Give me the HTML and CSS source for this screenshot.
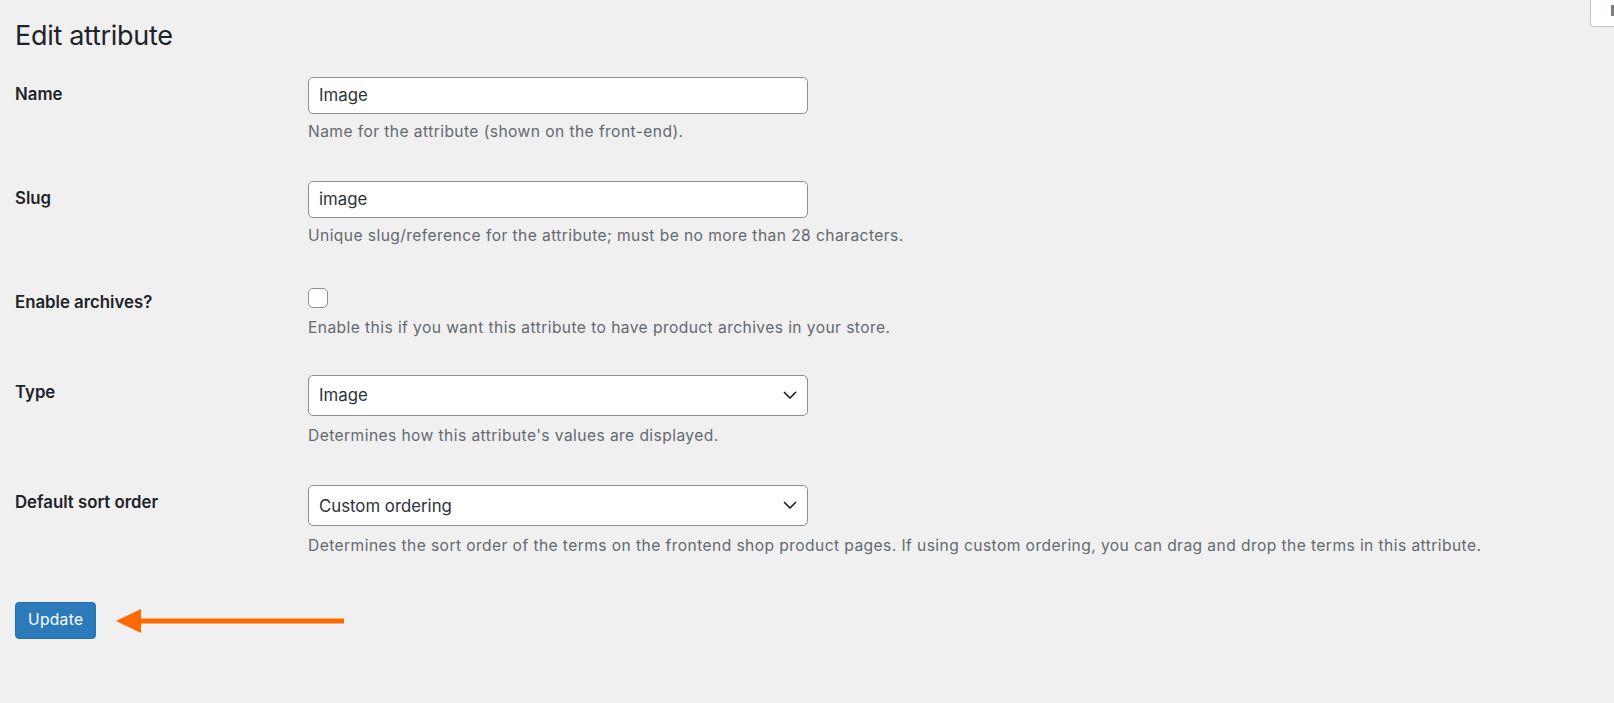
FILE: index.html
```html
<!DOCTYPE html>
<html lang="en">
<head>
<meta charset="utf-8">
<title>Edit attribute</title>
<link rel="stylesheet" href="styles.css">
</head>
<body>
<div class="screen-tab"><span class="screen-mark"></span></div>
<div class="wrap">
  <h1 class="title">Edit attribute</h1>
  <form class="form-table">
    <div class="row row-text">
      <label class="row-label" for="name">Name</label>
      <div class="row-field">
        <input class="text-input" id="name" type="text" value="Image">
        <p class="desc">Name for the attribute (shown on the front-end).</p>
      </div>
    </div>
    <div class="row row-text">
      <label class="row-label" for="slug">Slug</label>
      <div class="row-field">
        <input class="text-input" id="slug" type="text" value="image">
        <p class="desc">Unique slug/reference for the attribute; must be no more than 28 characters.</p>
      </div>
    </div>
    <div class="row row-check">
      <label class="row-label" for="archives">Enable archives?</label>
      <div class="row-field">
        <input class="checkbox" id="archives" type="checkbox">
        <p class="desc desc-check">Enable this if you want this attribute to have product archives in your store.</p>
      </div>
    </div>
    <div class="row row-select">
      <label class="row-label" for="type">Type</label>
      <div class="row-field">
        <div class="select-wrap">
          <select class="select" id="type"><option>Image</option></select>
          <svg class="chevron" width="14" height="9" viewBox="0 0 14 9"><path d="M1.5 1.5 L7 7 L12.5 1.5" fill="none" stroke="#1d2327" stroke-width="1.7" stroke-linecap="round" stroke-linejoin="round"/></svg>
        </div>
        <p class="desc desc-select">Determines how this attribute's values are displayed.</p>
      </div>
    </div>
    <div class="row row-select">
      <label class="row-label" for="order">Default sort order</label>
      <div class="row-field">
        <div class="select-wrap">
          <select class="select" id="order"><option>Custom ordering</option></select>
          <svg class="chevron" width="14" height="9" viewBox="0 0 14 9"><path d="M1.5 1.5 L7 7 L12.5 1.5" fill="none" stroke="#1d2327" stroke-width="1.7" stroke-linecap="round" stroke-linejoin="round"/></svg>
        </div>
        <p class="desc desc-select">Determines the sort order of the terms on the frontend shop product pages. If using custom ordering, you can drag and drop the terms in this attribute.</p>
      </div>
    </div>
    <div class="submit">
      <button class="btn-primary" type="button">Update</button>
      <svg class="arrow" width="230" height="26" viewBox="0 0 230 26"><polygon points="0,13 25,1 25,25" fill="#ff6a00"/><rect x="20" y="10.5" width="208" height="5" fill="#ff6a00"/></svg>
    </div>
  </form>
</div>
</body>
</html>
```
FILE: styles.css
```css
html, body {
  margin: 0;
  padding: 0;
  background: #f0f0f1;
  overflow: hidden;
}
body {
  font-family: Inter, "Liberation Sans", sans-serif;
  color: #1d2327;
  position: relative;
  min-height: 703px;
}
.screen-tab {
  position: absolute;
  top: -1px;
  right: 0;
  width: 24px;
  height: 28px;
  background: #fff;
  border: 1px solid #c3c4c7;
  border-right: 0;
  border-radius: 0 0 0 4px;
  box-sizing: border-box;
  overflow: hidden;
}
.screen-mark {
  position: absolute;
  left: 20px;
  top: 5px;
  width: 3px;
  height: 11px;
  background: #7a7d82;
}
.wrap {
  padding: 0 15px;
}
.title {
  font-size: 27px;
  letter-spacing: -0.3px;
  font-weight: 400;
  line-height: 1.3;
  margin: 17.5px 0 5px;
  color: #1d2327;
}
.form-table {
  margin: 0;
}
.row {
  display: flex;
  padding: 19px 0 21px;
}
.row-text {
  padding-bottom: 19px;
}
.row-check {
  padding-bottom: 16px;
}
.row-select {
  padding-bottom: 19px;
}
.row-label {
  width: 293px;
  flex: none;
  padding-top: 7px;
  font-size: 16.8px;
  line-height: 1.3;
  font-weight: 600;
  color: #1d2327;
}
.row-field {
  flex: 1;
}
.text-input {
  display: block;
  box-sizing: border-box;
  width: 500px;
  height: 37px;
  margin: 0;
  padding: 0 10px;
  border: 1px solid #8c8f94;
  border-radius: 5px;
  background: #fff;
  font-family: inherit;
  font-size: 16.8px;
  color: #2c3338;
}
.checkbox {
  display: block;
  appearance: none;
  -webkit-appearance: none;
  box-sizing: border-box;
  width: 20px;
  height: 20px;
  margin: 3px 0 0;
  border: 1px solid #8c8f94;
  border-radius: 5px;
  background: #fff;
}
.select-wrap {
  position: relative;
  width: 500px;
}
.select {
  display: block;
  appearance: none;
  -webkit-appearance: none;
  box-sizing: border-box;
  width: 500px;
  height: 41px;
  margin: 0;
  padding: 0 34px 0 10px;
  border: 1px solid #8c8f94;
  border-radius: 5px;
  background: #fff;
  font-family: inherit;
  font-size: 16.8px;
  color: #2c3338;
}
.chevron {
  position: absolute;
  right: 11px;
  top: 16px;
  pointer-events: none;
}
.desc {
  margin: 6px 0 0;
  font-size: 15.6px;
  letter-spacing: 0.42px;
  line-height: 1.5;
  color: #646970;
}
.desc-check {
  margin-top: 8px;
}
.desc-select {
  margin-top: 8px;
}
.submit {
  display: flex;
  align-items: center;
  margin: 25px 0 0;
}
.btn-primary {
  box-sizing: border-box;
  height: 37px;
  padding: 0 12px;
  border: 1px solid #2271b1;
  border-radius: 4px;
  background: #2b7bba;
  color: #fff;
  font-family: inherit;
  font-size: 15.6px;
  letter-spacing: 0.3px;
  line-height: 1;
}
.arrow {
  margin-left: 20px;
  margin-top: 2px;
}
```
